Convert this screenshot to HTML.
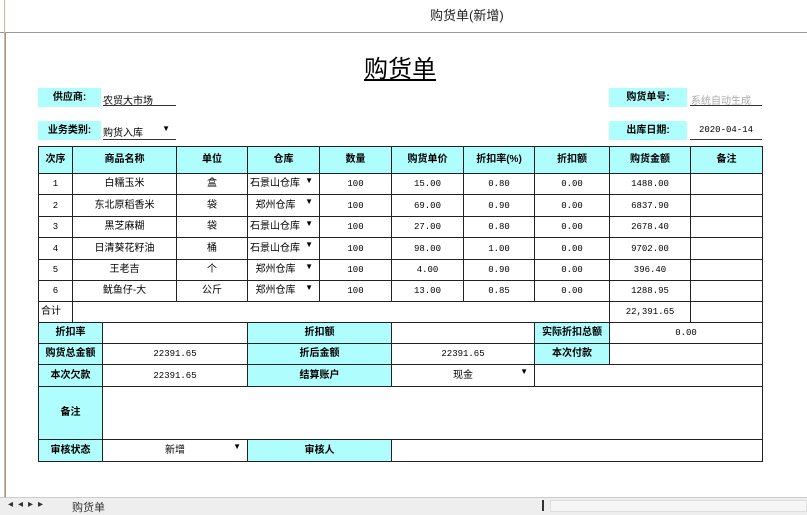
<!DOCTYPE html>
<html><head><meta charset="utf-8"><style>
*{margin:0;padding:0;box-sizing:border-box}
body{width:807px;height:515px;background:#fff;position:relative;overflow:hidden;font-family:"Liberation Sans","Noto Sans CJK SC",sans-serif;font-size:10px;color:#000}
.a{position:absolute}
table{border-collapse:collapse;table-layout:fixed;position:absolute;left:38px}
td{border:1px solid #222;text-align:center;padding:0;overflow:hidden;white-space:nowrap;line-height:12px}
.c{background:#b0fdfd;font-weight:bold}
.n{font-family:"Liberation Mono",monospace;font-size:9px}
.lab{background:#b0fdfd;font-weight:bold;text-align:center;line-height:19px;height:19px}
.dd{position:relative}
.dd i{position:absolute;right:6px;top:3px;font-style:normal;font-size:8px;line-height:8px}
.w{text-align:left;padding-left:2px}
</style></head><body>
<div class="a" style="left:0;top:0;width:807px;height:33px;border-bottom:1px solid #999"></div>
<div class="a" style="left:4px;top:0;width:1px;height:497px;background:#e8b08a"></div>
<div class="a" style="left:5px;top:33px;width:1px;height:464px;background:#999"></div>
<div class="a" style="left:430px;top:5px;font-size:13px;color:#222">购货单(新增)</div>
<div class="a" style="left:364px;top:49px;font-size:24px;text-decoration:underline;letter-spacing:0px">购货单</div>

<div class="a lab" style="left:38px;top:88px;width:63px">供应商:</div>
<div class="a" style="left:103px;top:92px;width:73px;border-bottom:1px solid #333;height:14px">农贸大市场</div>
<div class="a lab" style="left:38px;top:121px;width:63px">业务类别:</div>
<div class="a dd" style="left:103px;top:124px;width:73px;border-bottom:1px solid #333;height:16px">购货入库<i style="top:1px">▼</i></div>
<div class="a lab" style="left:609px;top:88px;width:78px">购货单号:</div>
<div class="a" style="left:690px;top:92px;width:72px;border-bottom:1px solid #333;height:14px;color:#aaa;padding-left:1px">系统自动生成</div>
<div class="a lab" style="left:609px;top:121px;width:78px">出库日期:</div>
<div class="a n" style="left:690px;top:125px;width:72px;border-bottom:1px solid #333;height:15px;text-align:center">2020-04-14</div>

<table style="top:146px;width:724px">
<colgroup><col style="width:34px"><col style="width:104px"><col style="width:71px"><col style="width:72px"><col style="width:72px"><col style="width:72px"><col style="width:71px"><col style="width:75px"><col style="width:81px"><col style="width:72px"></colgroup>
<tr style="height:27px"><td class="c">次序</td><td class="c">商品名称</td><td class="c">单位</td><td class="c">仓库</td><td class="c">数量</td><td class="c">购货单价</td><td class="c">折扣率(%)</td><td class="c">折扣额</td><td class="c">购货金额</td><td class="c">备注</td></tr>
<tr style="height:21px"><td class="n">1</td><td>白糯玉米</td><td>盒</td><td class="dd w">石景山仓库<i>▼</i></td><td class="n">100</td><td class="n">15.00</td><td class="n">0.80</td><td class="n">0.00</td><td class="n">1488.00</td><td></td></tr>
<tr style="height:22px"><td class="n">2</td><td>东北原稻香米</td><td>袋</td><td class="dd w">&nbsp;&nbsp;郑州仓库<i>▼</i></td><td class="n">100</td><td class="n">69.00</td><td class="n">0.90</td><td class="n">0.00</td><td class="n">6837.90</td><td></td></tr>
<tr style="height:21px"><td class="n">3</td><td>黑芝麻糊</td><td>袋</td><td class="dd w">石景山仓库<i>▼</i></td><td class="n">100</td><td class="n">27.00</td><td class="n">0.80</td><td class="n">0.00</td><td class="n">2678.40</td><td></td></tr>
<tr style="height:22px"><td class="n">4</td><td>日清葵花籽油</td><td>桶</td><td class="dd w">石景山仓库<i>▼</i></td><td class="n">100</td><td class="n">98.00</td><td class="n">1.00</td><td class="n">0.00</td><td class="n">9702.00</td><td></td></tr>
<tr style="height:21px"><td class="n">5</td><td>王老吉</td><td>个</td><td class="dd w">&nbsp;&nbsp;郑州仓库<i>▼</i></td><td class="n">100</td><td class="n">4.00</td><td class="n">0.90</td><td class="n">0.00</td><td class="n">396.40</td><td></td></tr>
<tr style="height:21px"><td class="n">6</td><td>鱿鱼仔-大</td><td>公斤</td><td class="dd w">&nbsp;&nbsp;郑州仓库<i>▼</i></td><td class="n">100</td><td class="n">13.00</td><td class="n">0.85</td><td class="n">0.00</td><td class="n">1288.95</td><td></td></tr>
<tr style="height:21px"><td style="text-align:left;padding-left:2px">合计</td><td colspan="7"></td><td class="n">22,391.65</td><td></td></tr>
</table>

<table style="top:322px;width:724px">
<colgroup><col style="width:64px"><col style="width:145px"><col style="width:144px"><col style="width:143px"><col style="width:75px"><col style="width:153px"></colgroup>
<tr style="height:21px"><td class="c">折扣率</td><td></td><td class="c">折扣额</td><td></td><td class="c">实际折扣总额</td><td class="n">0.00</td></tr>
<tr style="height:21px"><td class="c">购货总金额</td><td class="n">22391.65</td><td class="c">折后金额</td><td class="n">22391.65</td><td class="c">本次付款</td><td></td></tr>
<tr style="height:22px"><td class="c">本次欠款</td><td class="n">22391.65</td><td class="c">结算账户</td><td class="dd">现金<i>▼</i></td><td colspan="2"></td></tr>
<tr style="height:53px"><td class="c">备注</td><td colspan="5"></td></tr>
<tr style="height:22px"><td class="c">审核状态</td><td class="dd">新增<i>▼</i></td><td class="c">审核人</td><td colspan="3"></td></tr>
</table>

<div class="a" style="left:0;top:497px;width:807px;height:18px;background:#eee;border-top:1px solid #ccc"></div>
<div class="a" style="left:8px;top:499px;font-size:10px;color:#333;letter-spacing:5px">◂◂▸▸</div>
<div class="a" style="left:72px;top:499px;font-size:11px;color:#333">购货单</div>
<div class="a" style="left:542px;top:500px;width:2px;height:11px;background:#333"></div>
<div class="a" style="left:550px;top:500px;width:257px;height:12px;background:#f6f6f6;border:1px solid #ddd"></div>
</body></html>
